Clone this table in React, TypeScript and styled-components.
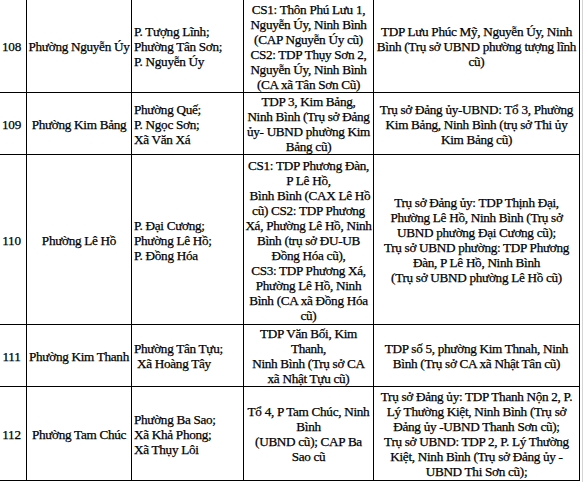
import React from "react";
import styled, { createGlobalStyle } from "styled-components";

const GlobalStyle = createGlobalStyle`
  html, body {
    margin: 0;
    padding: 0;
    background: #ffffff;
    overflow: hidden;
  }
  body {
    font-family: "Liberation Serif", "Times New Roman", "DejaVu Serif", serif;
    color: #000;
  }
`;

const Page = styled.div`
  display: flex;
  align-items: stretch;
  margin-top: -1px;
  margin-left: -4px;
  height: 484px;
`;

const Table = styled.div`
  display: flex;
  flex-direction: column;
  border-top: 1px solid #000;
  border-left: 1px solid #000;
  align-self: flex-start;
`;

const Row = styled.div<{ $h: number }>`
  display: grid;
  grid-template-columns: 30px 105px 112px 130px 206px;
  height: ${(p) => p.$h}px;
`;

const Cell = styled.div<{ $align?: "left" | "center" }>`
  box-sizing: border-box;
  border-right: 1px solid #000;
  border-bottom: 1px solid #000;
  display: flex;
  flex-direction: column;
  justify-content: center;
  align-items: ${(p) => (p.$align === "left" ? "flex-start" : "center")};
  text-align: ${(p) => p.$align ?? "center"};
  padding: 1px 1px 0 ${(p) => (p.$align === "left" ? "2px" : "1px")};
  font-family: "Liberation Serif", "Times New Roman", serif;
  font-size: 13.2px;
  line-height: 15px;
  letter-spacing: -0.3px;
  color: #000;
  -webkit-text-stroke: 0.25px #000;
  white-space: pre;
  overflow: visible;
`;

const Line = styled.span`
  display: block;
`;

const Gutter = styled.div`
  width: 1px;
  margin-left: 2px;
  background: #d4d4d4;
  align-self: stretch;
`;

type RowData = {
  no: string;
  name: string;
  merged: string[];
  offices: string[];
  hq: string[];
  h: number;
};

const rows: RowData[] = [
  {
    no: "108",
    name: "Phường Nguyễn Úy",
    merged: ["P. Tượng Lĩnh;", "Phường Tân Sơn;", "P. Nguyễn Úy"],
    offices: [
      "CS1: Thôn Phú Lưu 1,",
      "Nguyễn Úy, Ninh Bình",
      "(CAP Nguyễn Úy cũ)",
      "CS2: TDP Thụy Sơn 2,",
      "Nguyễn Úy, Ninh Bình",
      "(CA xã Tân Sơn Cũ)",
    ],
    hq: [
      "TDP Lưu Phúc Mỹ, Nguyễn Úy, Ninh",
      "Bình (Trụ sở UBND phường tượng lĩnh",
      "cũ)",
    ],
    h: 93,
  },
  {
    no: "109",
    name: "Phường Kim Bảng",
    merged: ["Phường Quế;", "P. Ngọc Sơn;", "Xã Văn Xá"],
    offices: [
      "TDP 3, Kim Bảng,",
      "Ninh Bình (Trụ sở Đảng",
      "ủy- UBND phường Kim",
      "Bảng cũ)",
    ],
    hq: [
      "Trụ sở Đảng ủy-UBND: Tổ 3, Phường",
      "Kim Bảng, Ninh Bình (trụ sở Thi ủy",
      "Kim Bảng cũ)",
    ],
    h: 62,
  },
  {
    no: "110",
    name: "Phường Lê Hồ",
    merged: ["P. Đại Cương;", "Phường Lê Hồ;", "P. Đồng Hóa"],
    offices: [
      "CS1: TDP Phương Đàn,",
      "P Lê Hồ,",
      " Bình Bình (CAX Lê Hồ",
      "cũ) CS2: TDP Phương",
      "Xá, Phường Lê Hồ, Ninh",
      "Bình (trụ sở ĐU-UB",
      "Đồng Hóa cũ),",
      "CS3: TDP Phương Xá,",
      "Phường Lê Hồ, Ninh",
      "Bình (CA xã Đồng Hóa",
      "cũ)",
    ],
    hq: [
      "Trụ sở Đảng ủy: TDP Thịnh Đại,",
      "Phường Lê Hồ, Ninh Bình (Trụ sở",
      "UBND phường Đại Cương cũ);",
      "Trụ sở UBND phường: TDP Phương",
      "Đàn, P Lê Hồ, Ninh Bình",
      "(Trụ sở UBND phường Lê Hồ cũ)",
    ],
    h: 170,
  },
  {
    no: "111",
    name: "Phường Kim Thanh",
    merged: ["Phường Tân Tựu;", " Xã Hoàng Tây"],
    offices: [
      "TDP Văn Bối, Kim",
      "Thanh,",
      "Ninh Bình (Trụ sở CA",
      "xã Nhật Tựu cũ)",
    ],
    hq: [
      "TDP số 5, phường Kim Thnah, Ninh",
      "Bình (Trụ sở CA xã Nhật Tân cũ)",
    ],
    h: 62,
  },
  {
    no: "112",
    name: "Phường Tam Chúc",
    merged: ["Phường Ba Sao;", "Xã Khả Phong;", "Xã Thụy Lôi"],
    offices: [
      "Tổ 4, P Tam Chúc, Ninh",
      "Bình",
      "(UBND cũ); CAP Ba",
      "Sao cũ",
    ],
    hq: [
      "Trụ sở Đảng ủy: TDP Thanh Nộn 2, P.",
      "Lý Thường Kiệt, Ninh Bình (Trụ sở",
      "Đảng ủy -UBND Thanh Sơn cũ);",
      "Trụ sở UBND: TDP 2, P. Lý Thường",
      "Kiệt, Ninh Bình (Trụ sở Đảng ủy -",
      "UBND Thi Sơn cũ);",
    ],
    h: 94,
  },
];

const Lines: React.FC<{ items: string[] }> = ({ items }) => (
  <>
    {items.map((t, i) => (
      <Line key={i}>{t}</Line>
    ))}
  </>
);

export default function App() {
  return (
    <>
      <GlobalStyle />
      <Page>
        <Table>
          {rows.map((r) => (
            <Row key={r.no} $h={r.h}>
              <Cell>{r.no}</Cell>
              <Cell>{r.name}</Cell>
              <Cell $align="left">
                <Lines items={r.merged} />
              </Cell>
              <Cell>
                <Lines items={r.offices} />
              </Cell>
              <Cell>
                <Lines items={r.hq} />
              </Cell>
            </Row>
          ))}
        </Table>
        <Gutter />
      </Page>
    </>
  );
}
